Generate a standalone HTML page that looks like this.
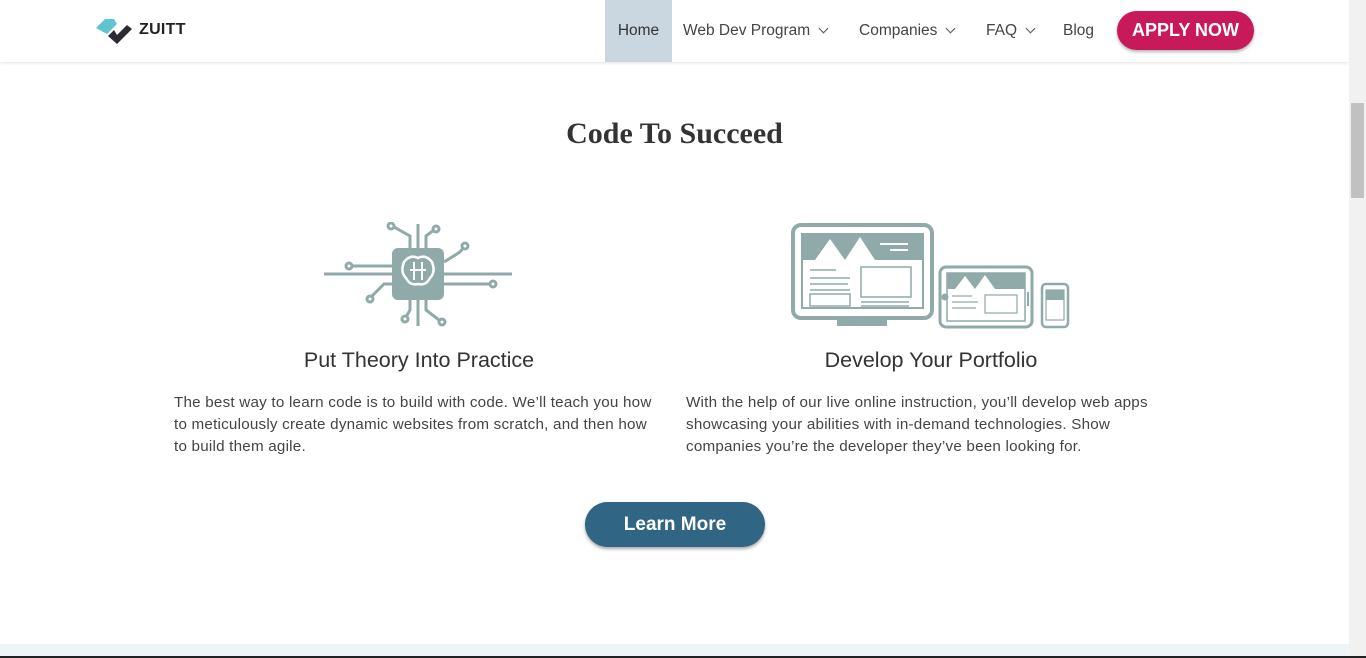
<!DOCTYPE html>
<html><head><meta charset="utf-8"><style>
*{margin:0;padding:0;box-sizing:border-box}
body{width:1366px;height:658px;overflow:hidden;background:#fff;font-family:"Liberation Sans",Arial,sans-serif;color:#333;position:relative}
.nav{position:absolute;left:0;top:0;width:1349px;height:62px;background:#fff;box-shadow:0 1px 3px rgba(0,0,0,.12)}
.logo{position:absolute;left:95px;top:16px}
.logo span{position:absolute;left:44px;top:5px;font-weight:bold;font-size:16px;color:#222;letter-spacing:.3px}
.nl{position:absolute;top:0;height:62px;line-height:62px;font-size:15.5px;color:#444}
.home{left:605px;width:67px;background:#cbd7e0;text-align:center;color:#333}
.chev{display:inline-block;width:7px;height:7px;border-right:1.3px solid #555;border-bottom:1.3px solid #555;transform:rotate(45deg);margin-left:10px;position:relative;top:-3px}
.apply{position:absolute;left:1117px;top:11px;width:137px;height:39px;border-radius:20px;background:#c8195a;color:#fff;font-weight:bold;font-size:18px;text-align:center;line-height:39px;box-shadow:0 2px 3px rgba(0,0,0,.3)}
.sb{position:absolute;left:1349px;top:0;width:17px;height:658px;background:#f1f1f1}
.thumb{position:absolute;left:1351px;top:103px;width:13px;height:95px;background:#c1c1c1}
h1{position:absolute;left:0;width:1349px;top:117px;text-align:center;font-family:"Liberation Serif",serif;font-size:30px;color:#333;font-weight:bold}
h2{position:absolute;text-align:center;font-size:21.5px;font-weight:normal;color:#333;top:348px}
p{position:absolute;top:392px;font-size:15.2px;line-height:22px;color:#444;white-space:nowrap;letter-spacing:.22px}
.lm{position:absolute;left:585px;top:502px;width:180px;height:45px;border-radius:23px;background:#306584;color:#fff;font-size:19px;font-weight:bold;text-align:center;line-height:45px;box-shadow:0 2px 3px rgba(0,0,0,.35)}
.bot{position:absolute;left:0;top:644px;width:1349px;height:12px;background:#eef5f6}
.bl{position:absolute;left:0;top:656px;width:1366px;height:2px;background:#222}
</style></head><body>
<div class="nav">
 <div class="logo"><svg width="40" height="30" viewBox="0 0 40 30"><path d="M1 12 L10 3 L19 3 L22 8 L12 18 Z" fill="#5ec4d2"/><path d="M13 20 L19 14 L22 19 L32 9 L37 13 L22 28 Z" fill="#2b2b33"/></svg><span>ZUITT</span></div>
 <div class="nl home">Home</div>
 <div class="nl" style="left:683px">Web Dev Program<span class="chev"></span></div>
 <div class="nl" style="left:859px">Companies<span class="chev"></span></div>
 <div class="nl" style="left:986px">FAQ<span class="chev"></span></div>
 <div class="nl" style="left:1063px">Blog</div>
 <div class="apply">APPLY NOW</div>
</div>
<h1>Code To Succeed</h1>
<svg style="position:absolute;left:322px;top:222px" width="192" height="106" viewBox="0 0 192 106" fill="none" stroke="#8faaa9" stroke-width="3">
<line x1="2" y1="52" x2="190" y2="52"/>
<line x1="96" y1="2" x2="96" y2="104"/>
<rect x="70" y="26" width="52" height="52" rx="6" fill="#8faaa9" stroke="none"/>
<path d="M88 26 L88 14 L72 5"/><circle cx="69" cy="4" r="3"/>
<path d="M104 26 L104 14 L112 8"/><circle cx="114" cy="7" r="3"/>
<path d="M122 40 L138 30 L141 26"/><circle cx="143" cy="24" r="3"/>
<path d="M122 62 L168 62"/><circle cx="171" cy="62" r="3"/>
<path d="M70 44 L30 44"/><circle cx="27" cy="44" r="3"/>
<path d="M70 62 L62 62 L50 74"/><circle cx="48" cy="77" r="3"/>
<path d="M88 78 L88 88 L84 95"/><circle cx="83" cy="97" r="3"/>
<path d="M104 78 L104 88 L117 98"/><circle cx="120" cy="100" r="3"/>
<path d="M82 40 q6-8 14-4 q8-4 14 4 q4 10-2 16 q-4 8-12 6 q-8 2-12-6 q-6-6-2-16z" stroke="#fff" stroke-width="2.5"/>
<path d="M92 40 v18 M100 40 v18 M88 48 h16" stroke="#fff" stroke-width="2"/>
</svg>
<svg style="position:absolute;left:790px;top:222px" width="282" height="108" viewBox="0 0 282 108" fill="none" stroke="#8faaa9" stroke-width="3">
<rect x="3" y="3" width="139" height="93" rx="8" stroke-width="4"/>
<rect x="12" y="12" width="121" height="74" fill="#fff" stroke-width="2"/>
<rect x="12" y="12" width="121" height="26" fill="#8faaa9" stroke="none"/>
<path d="M25 38 L40 17 L55 38 Z M55 38 L70 15 L85 38 Z" fill="#fff" stroke="none"/>
<path d="M90 22 h28 M100 28 h18" stroke="#fff" stroke-width="2"/>
<path d="M20 48 h26 M20 56 h40 M20 62 h38 M20 68 h40" stroke-width="1.5"/>
<rect x="20" y="72" width="40" height="12" stroke-width="1.5"/>
<rect x="71" y="45" width="50" height="30" stroke-width="1.5"/>
<path d="M71 80 h48 M71 84 h48" stroke-width="1.5"/>
<rect x="47" y="96" width="50" height="8" fill="#8faaa9" stroke="none"/>
<rect x="150" y="45" width="92" height="60" rx="6" stroke-width="3"/>
<rect x="157" y="51" width="78" height="48" stroke-width="1.5"/>
<rect x="157" y="51" width="78" height="16" fill="#8faaa9" stroke="none"/>
<path d="M165 67 L175 54 L185 67 Z M185 67 L195 53 L205 67 Z" fill="#fff" stroke="none"/>
<circle cx="155" cy="75" r="2" fill="#8faaa9"/>
<path d="M238 70 v14" stroke-width="2"/>
<path d="M162 74 h20 M162 80 h26 M162 86 h24" stroke-width="1.2"/>
<rect x="195" y="73" width="32" height="18" stroke-width="1.2"/>
<rect x="252" y="62" width="26" height="43" rx="4" stroke-width="2.5"/>
<rect x="256" y="68" width="18" height="30" stroke-width="1.2"/>
<rect x="256" y="68" width="18" height="10" fill="#8faaa9" stroke="none"/>
</svg>
<h2 style="left:174px;width:490px">Put Theory Into Practice</h2>
<h2 style="left:686px;width:490px">Develop Your Portfolio</h2>
<p style="left:174px">The best way to learn code is to build with code. We’ll teach you how<br>to meticulously create dynamic websites from scratch, and then how<br>to build them agile.</p>
<p style="left:686px">With the help of our live online instruction, you’ll develop web apps<br>showcasing your abilities with in-demand technologies. Show<br>companies you’re the developer they’ve been looking for.</p>
<div class="lm">Learn More</div>
<div class="bot"></div>
<div class="sb"></div><div class="thumb"></div>
<div class="bl"></div>
</body></html>
